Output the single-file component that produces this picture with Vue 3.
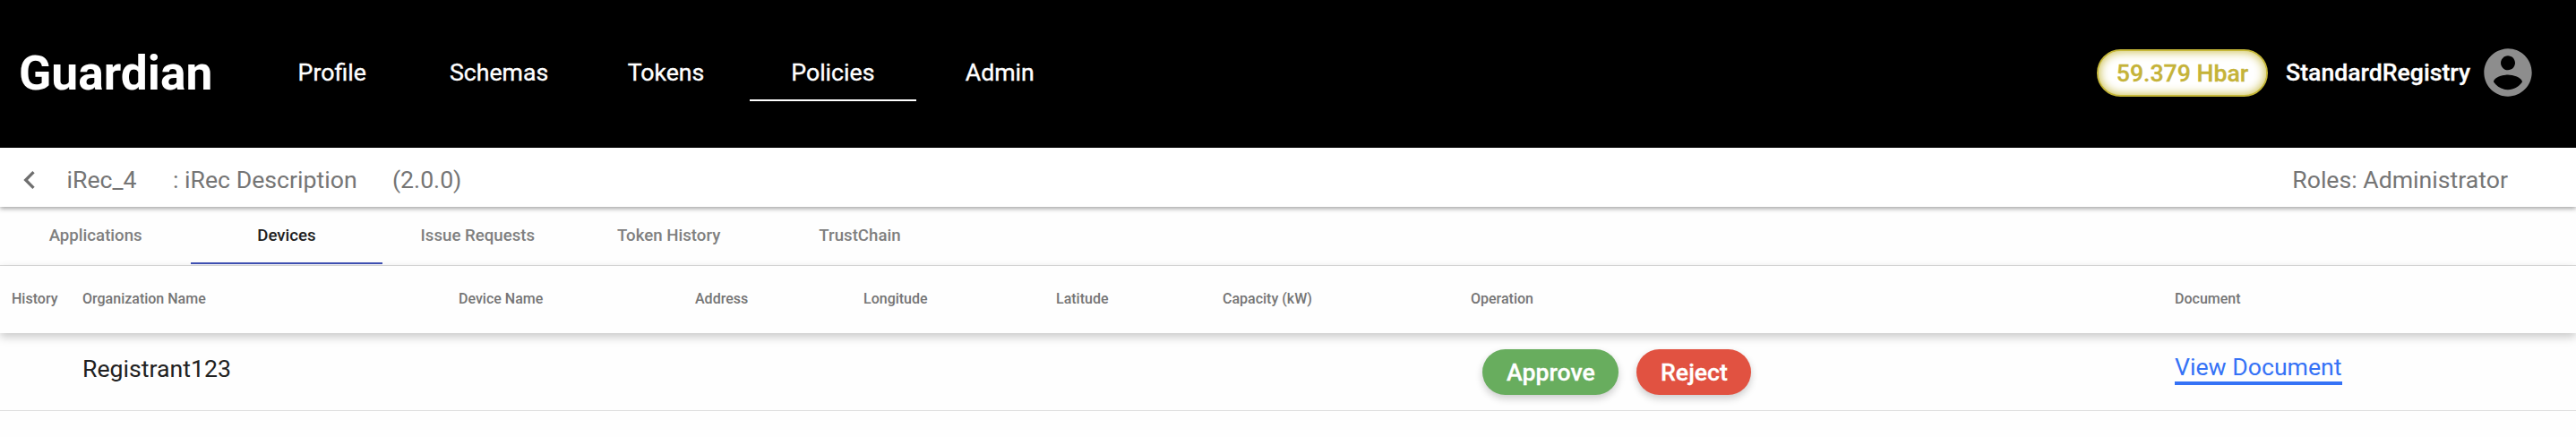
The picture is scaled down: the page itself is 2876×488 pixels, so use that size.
<script setup>
const nav = ['Profile', 'Schemas', 'Tokens', 'Policies', 'Admin']
const tabs = ['Applications', 'Devices', 'Issue Requests', 'Token History', 'TrustChain']
const columns = ['History', 'Organization Name', 'Device Name', 'Address', 'Longitude', 'Latitude', 'Capacity (kW)', 'Operation', 'Document']
</script>

<template>
  <div class="page">
    <header class="top">
      <div class="brand">Guardian</div>
      <nav class="nav">
        <a v-for="item in nav" :key="item" class="nav-item" :class="{ active: item === 'Policies' }">{{ item }}</a>
      </nav>
      <div class="balance">59.379 Hbar</div>
      <div class="user">StandardRegistry</div>
      <svg class="avatar" viewBox="0 0 24 24">
        <path d="M12 2C6.48 2 2 6.48 2 12s4.48 10 10 10 10-4.48 10-10S17.52 2 12 2zm0 3c1.66 0 3 1.34 3 3s-1.34 3-3 3-3-1.34-3-3 1.34-3 3-3zm0 14.2c-2.5 0-4.71-1.28-6-3.22.03-1.99 4-3.08 6-3.08 1.99 0 5.97 1.09 6 3.08-1.29 1.94-3.5 3.22-6 3.22z" />
      </svg>
    </header>

    <section class="policy">
      <svg class="back" viewBox="0 0 24 24"><path d="M15.41 7.41L14 6l-6 6 6 6 1.41-1.41L10.83 12z" /></svg>
      <span class="name">iRec_4</span>
      <span class="desc">: iRec Description</span>
      <span class="version">(2.0.0)</span>
      <span class="roles">Roles: Administrator</span>
    </section>

    <div class="tabs">
      <div v-for="tab in tabs" :key="tab" class="tab" :class="{ active: tab === 'Devices' }">{{ tab }}</div>
    </div>

    <div class="row head">
      <div v-for="c in columns" :key="c">{{ c }}</div>
    </div>
    <div class="row body">
      <div></div>
      <div class="org">Registrant123</div>
      <div></div><div></div><div></div><div></div><div></div>
      <div class="ops">
        <button class="btn approve">Approve</button>
        <button class="btn reject">Reject</button>
      </div>
      <div class="doc"><a class="link">View Document</a></div>
    </div>
  </div>
</template>

<style>
body { margin: 0; background: #fff; }
</style>

<style scoped>
.page { width: 2876px; height: 488px; overflow: hidden; background: #fefefe; font-family: Roboto, sans-serif; font-size: 26.66px; color: #212121; }
.page * { box-sizing: border-box; white-space: nowrap; }
.top { height: 165px; background: #000; color: #fff; display: flex; align-items: center; padding-right: 44px; }
.brand { width: 277.5px; padding-left: 21px; font-size: 53.33px; font-weight: 700; line-height: 60px; padding-bottom: 2px; }
.nav { display: flex; flex: 1; }
.nav-item { width: 186.4px; height: 61px; line-height: 58px; text-align: center; font-weight: 400; -webkit-text-stroke: 0.35px #fff; border-bottom: 2px solid transparent; }
.nav-item.active { border-color: #fff; }
.balance { width: 191px; height: 53px; margin-bottom: 2px; border: 2px solid #c5b739; border-radius: 27px; background: #fff; color: #c5b339; box-shadow: inset 0 0 12px #c5b739; text-align: center; line-height: 50px; font-weight: 500; -webkit-text-stroke: 0.3px #c5b339; }
.user { width: 205px; margin: 0 11px 0 20px; font-weight: 500; -webkit-text-stroke: 0.3px #fff; line-height: 50px; padding-bottom: 4px; }
.avatar { width: 64px; height: 64px; margin-bottom: 3px; fill: #8d8d8d; }
.policy { position: relative; z-index: 2; height: 66px; background: #fff; color: #757575; display: flex; align-items: center; padding: 6px 76px 0 13px; box-shadow: 0 2px 5px rgba(0, 0, 0, 0.36); }
.back { width: 40px; height: 40px; fill: #6f6f6f; margin-right: 21.5px; }
.name { width: 118.5px; }
.desc { width: 245px; }
.roles { margin-left: auto; }
.tabs { height: 66px; display: flex; border-bottom: 1px solid #dcdcdc; }
.tab { width: 213.33px; height: 64px; border-bottom: 2px solid transparent; text-align: center; line-height: 65px; font-size: 18.66px; font-weight: 500; color: #7f7f7f; }
.tab.active { color: #212121; border-color: #3f51b5; }
.row { display: grid; grid-template-columns: 79px 420px 264px 188px 215px 186px 277px 786px 1fr; padding-left: 13px; }
.head { position: relative; z-index: 1; height: 75px; line-height: 73px; font-size: 16px; font-weight: 500; color: #757575; background: #fefefe; box-shadow: 0 4px 10px rgba(0, 0, 0, 0.22); }
.body { height: 87px; border-bottom: 1px solid #dedede; }
.org { line-height: 80px; }
.ops { display: flex; gap: 20px; padding: 18px 0 0 13px; }
.btn { height: 51px; border: 0; border-radius: 26px; padding: 0 0 0 1px; color: #fff; font: 500 26.66px/52px Roboto, sans-serif; -webkit-text-stroke: 0.3px #fff; box-shadow: 0 4px 8px rgba(0, 0, 0, 0.2); }
.approve { width: 152px; background: #68ad5e; }
.reject { width: 128px; background: #e15241; }
.doc { padding-top: 22px; }
.link { display: inline-block; line-height: 31px; color: #3572f6; border-bottom: 4px solid #3572f6; }
</style>
